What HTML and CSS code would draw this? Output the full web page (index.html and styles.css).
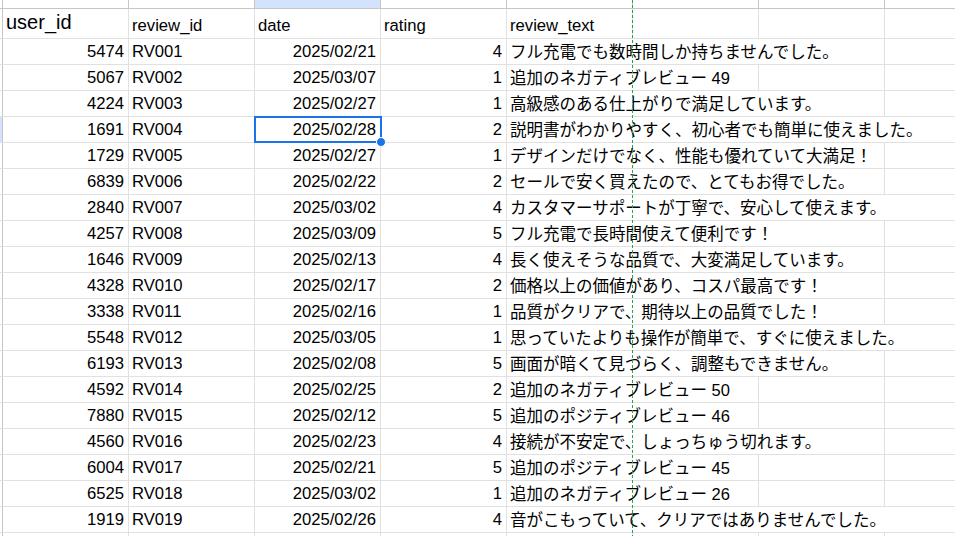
FILE: index.html
```html
<!DOCTYPE html>
<html lang="ja">
<head>
<meta charset="utf-8">
<title>Sheet</title>
<link rel="stylesheet" href="styles.css">
</head>
<body>
<div class="sheet">
  <div class="row colhead">
    <div class="stub"></div>
    <div class="ch"></div><div class="ch"></div><div class="ch on"></div><div class="ch"></div>
    <div class="ch"></div><div class="ch"></div><div class="ch"></div><div class="ch"></div>
  </div>
  <div class="row head">
    <div class="stub"></div>
    <div class="c big">user_id</div>
    <div class="c">review_id</div>
    <div class="c">date</div>
    <div class="c">rating</div>
    <div class="c">review_text</div>
    <div class="c"></div><div class="c"></div><div class="c"></div>
  </div>

  <div class="row"><div class="stub"></div><div class="c r">5474</div><div class="c">RV001</div><div class="c r">2025/02/21</div><div class="c r">4</div><div class="c t s3">フル充電でも数時間しか持ちませんでした。</div><div class="c"></div></div>
  <div class="row"><div class="stub"></div><div class="c r">5067</div><div class="c">RV002</div><div class="c r">2025/03/07</div><div class="c r">1</div><div class="c t s2">追加のネガティブレビュー 49</div><div class="c"></div><div class="c"></div></div>
  <div class="row"><div class="stub"></div><div class="c r">4224</div><div class="c">RV003</div><div class="c r">2025/02/27</div><div class="c r">1</div><div class="c t s3">高級感のある仕上がりで満足しています。</div><div class="c"></div></div>
  <div class="row"><div class="stub on"></div><div class="c r">1691</div><div class="c">RV004</div><div class="c r">2025/02/28</div><div class="c r">2</div><div class="c t s4">説明書がわかりやすく、初心者でも簡単に使えました。</div></div>
  <div class="row"><div class="stub"></div><div class="c r">1729</div><div class="c">RV005</div><div class="c r">2025/02/27</div><div class="c r">1</div><div class="c t s3">デザインだけでなく、性能も優れていて大満足！</div><div class="c"></div></div>
  <div class="row"><div class="stub"></div><div class="c r">6839</div><div class="c">RV006</div><div class="c r">2025/02/22</div><div class="c r">2</div><div class="c t s3">セールで安く買えたので、とてもお得でした。</div><div class="c"></div></div>
  <div class="row"><div class="stub"></div><div class="c r">2840</div><div class="c">RV007</div><div class="c r">2025/03/02</div><div class="c r">4</div><div class="c t s4">カスタマーサポートが丁寧で、安心して使えます。</div></div>
  <div class="row"><div class="stub"></div><div class="c r">4257</div><div class="c">RV008</div><div class="c r">2025/03/09</div><div class="c r">5</div><div class="c t s3">フル充電で長時間使えて便利です！</div><div class="c"></div></div>
  <div class="row"><div class="stub"></div><div class="c r">1646</div><div class="c">RV009</div><div class="c r">2025/02/13</div><div class="c r">4</div><div class="c t s3">長く使えそうな品質で、大変満足しています。</div><div class="c"></div></div>
  <div class="row"><div class="stub"></div><div class="c r">4328</div><div class="c">RV010</div><div class="c r">2025/02/17</div><div class="c r">2</div><div class="c t s3">価格以上の価値があり、コスパ最高です！</div><div class="c"></div></div>
  <div class="row"><div class="stub"></div><div class="c r">3338</div><div class="c">RV011</div><div class="c r">2025/02/16</div><div class="c r">1</div><div class="c t s3">品質がクリアで、期待以上の品質でした！</div><div class="c"></div></div>
  <div class="row"><div class="stub"></div><div class="c r">5548</div><div class="c">RV012</div><div class="c r">2025/03/05</div><div class="c r">1</div><div class="c t s4">思っていたよりも操作が簡単で、すぐに使えました。</div></div>
  <div class="row"><div class="stub"></div><div class="c r">6193</div><div class="c">RV013</div><div class="c r">2025/02/08</div><div class="c r">5</div><div class="c t s3">画面が暗くて見づらく、調整もできません。</div><div class="c"></div></div>
  <div class="row"><div class="stub"></div><div class="c r">4592</div><div class="c">RV014</div><div class="c r">2025/02/25</div><div class="c r">2</div><div class="c t s2">追加のネガティブレビュー 50</div><div class="c"></div><div class="c"></div></div>
  <div class="row"><div class="stub"></div><div class="c r">7880</div><div class="c">RV015</div><div class="c r">2025/02/12</div><div class="c r">5</div><div class="c t s2">追加のポジティブレビュー 46</div><div class="c"></div><div class="c"></div></div>
  <div class="row"><div class="stub"></div><div class="c r">4560</div><div class="c">RV016</div><div class="c r">2025/02/23</div><div class="c r">4</div><div class="c t s3">接続が不安定で、しょっちゅう切れます。</div><div class="c"></div></div>
  <div class="row"><div class="stub"></div><div class="c r">6004</div><div class="c">RV017</div><div class="c r">2025/02/21</div><div class="c r">5</div><div class="c t s2">追加のポジティブレビュー 45</div><div class="c"></div><div class="c"></div></div>
  <div class="row"><div class="stub"></div><div class="c r">6525</div><div class="c">RV018</div><div class="c r">2025/03/02</div><div class="c r">1</div><div class="c t s2">追加のネガティブレビュー 26</div><div class="c"></div><div class="c"></div></div>
  <div class="row"><div class="stub"></div><div class="c r">1919</div><div class="c">RV019</div><div class="c r">2025/02/26</div><div class="c r">4</div><div class="c t s4">音がこもっていて、クリアではありませんでした。</div></div>
  <div class="row"><div class="stub"></div><div class="c"></div><div class="c"></div><div class="c"></div><div class="c"></div><div class="c"></div><div class="c"></div><div class="c"></div><div class="c"></div></div>

  <div class="guide"></div>
  <div class="selbox"></div>
  <div class="handle"></div>
</div>
</body>
</html>
```

FILE: styles.css
```css
html, body {
  margin: 0;
  padding: 0;
  background: #fff;
  overflow: hidden;
}
body {
  width: 955px;
  height: 536px;
}
.sheet {
  position: relative;
  width: 1011px;
  font-family: "Liberation Sans", Arial, "Noto Sans CJK JP", sans-serif;
  font-size: 16.67px;
  color: #000;
}
.row {
  display: grid;
  grid-template-columns: 3px repeat(8, 126px);
  height: 26px;
  box-sizing: border-box;
  border-bottom: 1px solid #e1e1e1;
}
.row.colhead {
  height: 9px;
  border-bottom-color: #c4c7c5;
}
.row.head {
  height: 30px;
}
.stub {
  box-sizing: border-box;
  border-right: 1px solid #c4c7c5;
  background: #fff;
}
.stub.on {
  background: #d3e3fd;
}
.ch {
  box-sizing: border-box;
  border-right: 1px solid #c4c7c5;
  background: #fff;
}
.ch.on {
  background: #d3e3fd;
}
.c {
  box-sizing: border-box;
  border-right: 1px solid #e1e1e1;
  display: flex;
  align-items: flex-end;
  padding: 0 4px 2px 3px;
  line-height: 20px;
  white-space: nowrap;
  overflow: visible;
}
.c.r {
  justify-content: flex-end;
}
.c.big {
  font-size: 20px;
  line-height: 24px;
  padding-bottom: 4px;
}
.c.t {
  font-size: 16.5px;
}
.s2 { grid-column: span 2; }
.s3 { grid-column: span 3; }
.s4 { grid-column: span 4; }

.guide {
  position: absolute;
  left: 632px;
  top: 0;
  width: 1px;
  height: 536px;
  background: repeating-linear-gradient(to bottom, #2e9e4f 0 3px, transparent 3px 5px);
}
.selbox {
  position: absolute;
  left: 254px;
  top: 116px;
  width: 128px;
  height: 27px;
  box-sizing: border-box;
  border: 2px solid #1a73e8;
}
.handle {
  position: absolute;
  left: 376px;
  top: 137px;
  width: 10px;
  height: 10px;
  box-sizing: border-box;
  border-radius: 50%;
  background: #1a73e8;
  border: 1px solid #fff;
}
```
